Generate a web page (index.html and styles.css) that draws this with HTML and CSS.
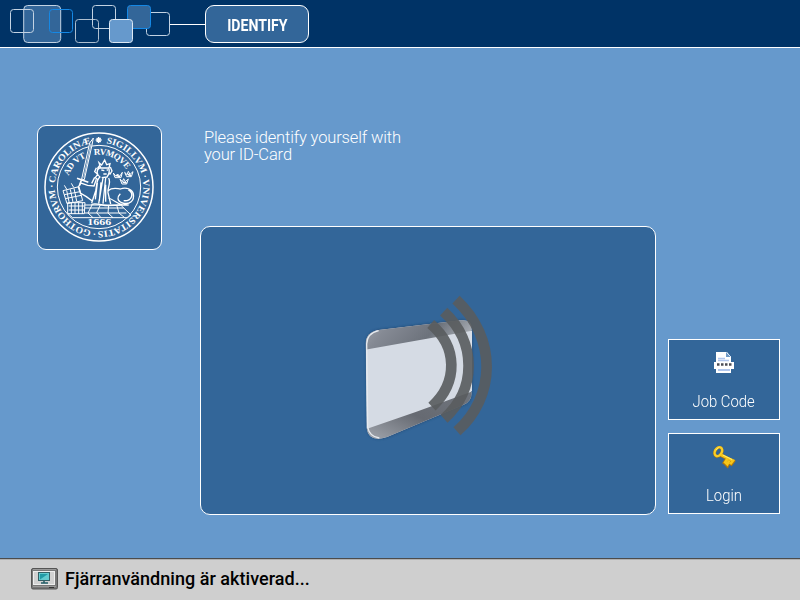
FILE: index.html
```html
<!DOCTYPE html>
<html lang="en">
<head>
<meta charset="utf-8">
<title>Identify</title>
<link rel="stylesheet" href="styles.css">
</head>
<body>
<div class="screen">
  <header class="header">
    <svg class="chain" width="205" height="47" viewBox="0 0 205 47" fill="none">
      <rect x="23.700" y="5.500" width="37" height="37" rx="4" fill="#336699" stroke="#c3d3e3"/>
      <rect x="10.500" y="9.500" width="23" height="23" rx="3" stroke="#c3d3e3"/>
      <rect x="49.500" y="9.500" width="23" height="23" rx="3" stroke="#1588e5"/>
      <rect x="75.500" y="19.500" width="23" height="23" rx="3" stroke="#aebfd0"/>
      <rect x="92.500" y="5.500" width="23" height="23" rx="3" stroke="#c3d3e3"/>
      <rect x="146.500" y="12.500" width="23" height="23" rx="3" stroke="#c3d3e3"/>
      <rect x="127.500" y="5.500" width="23" height="23" rx="3" fill="#336699" stroke="#1588e5"/>
      <rect x="109.500" y="19.500" width="23" height="23" rx="3" fill="#6699cc" stroke="#dce8f4"/>
      <path d="M170 24.500H205" stroke="#fff"/>
    </svg>
    <div class="tab"><span class="tab-text">IDENTIFY</span></div>
  </header>
  <main class="main">
    <div class="crest">
      <svg width="123" height="123" viewBox="12 12 369 369" fill="none" stroke="#fff">
        <defs>
          <path id="outer" d="M195 328A133 133 0 0 1 195 62A133 133 0 0 1 195 328"/>
          <path id="inner" d="M98 195A97 97 0 0 1 292 195"/>
        </defs>
        <circle cx="195" cy="195" r="162" stroke-width="4.500"/>
        <circle cx="195" cy="195" r="125" stroke-width="3"/>
        <g class="legend" transform="rotate(7 195 195)">
          <text><textPath href="#outer" startOffset="7" textLength="178" lengthAdjust="spacingAndGlyphs">GOTHORVM</textPath></text>
          <text><textPath href="#outer" startOffset="190">·</textPath></text>
          <text><textPath href="#outer" startOffset="204" textLength="174" lengthAdjust="spacingAndGlyphs">CAROLINÆ</textPath></text>
          <text><textPath href="#outer" startOffset="423" textLength="147" lengthAdjust="spacingAndGlyphs">SIGILLVM</textPath></text>
          <text><textPath href="#outer" startOffset="575">·</textPath></text>
          <text><textPath href="#outer" startOffset="588" textLength="235" lengthAdjust="spacingAndGlyphs">VNIVERSITATIS</textPath></text>
          <text><textPath href="#outer" startOffset="827">·</textPath></text>
        </g>
        <g class="motto">
          <text><textPath href="#inner" startOffset="34" textLength="78">AD VT</textPath></text>
          <text><textPath href="#inner" startOffset="137" textLength="112">RVMQVE</textPath></text>
        </g>
        <path d="M194 45v18M185 54h18M188 48l12 12M200 48l-12 12" stroke-width="4"/>
        <path d="M178 48l-11 15-24 108 8 2 23-104z" fill="#336699" stroke-width="3"/>
        <path d="M171 65l-22 102" stroke-width="2"/>
        <path d="M129 169l34 12M143 172l-7 19" stroke-width="5"/>
        <path d="M195 122l8 7 9-15 6 14 10-3-3 13h-25zM190 140l7-10M198 137c-13 7-10 22 1 29M224 138c5 12 1 19-5 27l-16 2M202 144l9 2M218 143l4 2M208 156h10M187 137l-5 12 9 8-7 10 8 6M229 135l5 12-7 11" stroke-width="4"/>
        <path d="M198 165c-12 8-9 28-13 42l-12 36M207 168l-13 77M215 168l-8 77M224 168c8 14-4 30-2 44l8 34M187 172l-7 20-19-2-20-7-8 12 6 18 18 11 19 14M182 166l-9 18M190 183l-6 49M201 181l-5 56M215 188v51" stroke-width="4"/>
        <path d="M222 206c14-11 26-6 37-5 17-7 36 0 39 15 4 20-11 33-32 27-18-6-17-18-7-28M283 203c19 12 10 35-14 33M224 228c18 7 26 18 42 21l-45 2c-17 0-31-9-49-4M284 249h-24" stroke-width="4"/>
        <g stroke-width="3">
          <path d="M238 153l8 10 5-7 6 7 8-12-4 16h-18zM272 151l7 7 4-10 5 9 9-8-5 15h-14zM258 171l7 8 4-9 5 9 9-8-5 15h-14z"/>
          <path d="M247 160l11 5M281 157l10 4M266 180l12 3" stroke-width="5"/>
        </g>
        <path d="M87 206l48-12 11 42-47 9zM98 205l8 39M109 202l8 39M120 199l8 38M91 218l47-9M94 230l48-10M91 190l8 13M112 184l7 12M101 242h52l-2 33h-50zM112 242v34M123 242v34M134 242v34M145 242v34M104 252h47M104 264h47" stroke-width="3"/>
        <path d="M151 249h109l31 30-10 8H116l-14-12M151 258h118M151 273h126M174 249l-12 24 15 14M199 249l-11 23 13 15M224 249l-2 24 15 14M248 249l7 24 17 14" stroke-width="3"/>
        <text class="year" x="160" y="308" textLength="72" lengthAdjust="spacingAndGlyphs">1666</text>
      </svg>
    </div>
    <section class="content">
      <div class="prompt"><div class="line-one">Please identify yourself with</div><div class="line-two">your ID-Card</div></div>
      <div class="reader">
        <svg class="card" width="145" height="160" viewBox="0 0 435 480">
          <defs>
            <linearGradient id="edge" x1="0" y1="0" x2="1" y2="0.3"><stop offset="0" stop-color="#a6abb4"/><stop offset=".3" stop-color="#858a94"/><stop offset=".7" stop-color="#6c727b"/><stop offset="1" stop-color="#a4a9b0"/></linearGradient>
            <linearGradient id="low" x1="0" y1="1" x2="1" y2="0"><stop offset="0" stop-color="#a8adb5"/><stop offset=".5" stop-color="#666a72"/><stop offset="1" stop-color="#70757d"/></linearGradient>
            <clipPath id="shape"><path d="M32 176Q33 142 71 135L318 106Q350 104 350 130V326Q349 349 326 359L96 456Q41 474 35 429Z"/></clipPath>
            <filter id="shade" x="-10%" y="-10%" width="120%" height="120%"><feGaussianBlur stdDeviation="5"/></filter>
          </defs>
          <path d="M34 176Q35 142 71 135L318 106Q350 104 350 130V326Q349 349 326 359L96 456Q43 472 37 429Z" fill="#183b60" opacity=".8" filter="url(#shade)"/>
          <g clip-path="url(#shape)">
            <path d="M25 90h335v380H25z" fill="#d5dbe4"/>
            <path d="M25 90h335v46L25 195z" fill="url(#edge)"/>
            <path d="M25 435L180 382 360 316v160H25z" fill="url(#low)"/>
          </g>
          <path d="M71 137Q36 145 35 177L38 426Q43 455 73 459" fill="none" stroke="#e7ebf0" stroke-width="4"/>
          <path d="M349 138v180" stroke="#eef1f5" stroke-width="3"/>
          <g fill="none" stroke="#595c5f" stroke-opacity=".91" stroke-width="32">
            <path d="M227 117C308 185 310 292 231 365"/>
            <path d="M266 80C366 171 365 314 267 401"/>
            <path d="M303 44C428 160 422 336 306 439"/>
          </g>
        </svg>
      </div>
    </section>
    <nav class="actions">
      <div class="button">
        <svg class="icon" width="24" height="24" viewBox="-1 0 24 24">
          <path d="M3 1h11l4 5v16H3z" fill="#fff"/>
          <path d="M13 1v5h5z" fill="#6e99c6"/><path d="M14 2l4 4" stroke="#dce9fa"/>
          <path d="M5 7.500h7M5 9.500h11" stroke="#b1c6ed" stroke-width="1.500"/>
          <path d="M1 11h20v7H1z" fill="#fff"/>
          <path d="M4 13.500h2.500M8 13.500h2.500M12 13.500h2.500M16 13.500h2.500" stroke="#4c4c54" stroke-width="2.500"/>
          <path d="M5 19h12" stroke="#b1c6ed" stroke-width="2"/>
        </svg>
        <span class="job">Job Code</span>
      </div>
      <div class="button">
        <svg class="icon" width="24" height="24" viewBox="-1.300 -.5 25.500 25.500" fill="none">
          <ellipse cx="5.500" cy="6.800" rx="3.600" ry="5" transform="rotate(30 5.500 6.800)" stroke="#b37b07" stroke-width="3.200"/>
          <path d="M8 10l13 7-3 4M15 14l-4 6M11 17l4 4 2-4" stroke="#b57908" stroke-width="4"/>
          <ellipse cx="5.500" cy="6.500" rx="3.600" ry="5" transform="rotate(30 5.500 6.500)" stroke="#f9ce28" stroke-width="2.500"/>
          <path d="M8 10l13 6-3 4M15 14l-3 5M12 17l3 3 2-4" stroke="#f7c719" stroke-width="2.800"/>
          <path d="M3 5l3-3M10 10l10 5" stroke="#fff37d"/>
        </svg>
        <span class="login">Login</span>
      </div>
    </nav>
  </main>
  <footer class="footer">
    <svg width="28" height="23" viewBox="0 0 28 23">
      <rect x=".5" y=".5" width="26" height="20.500" rx="1.500" fill="#777" stroke="#555"/>
      <path d="M2 1.500h23" stroke="#999"/>
      <rect x="2.500" y="3.500" width="21" height="13" fill="#d1d1d1" stroke="#eee"/>
      <rect x="7.500" y="4.500" width="11" height="8" fill="#63cbd0" stroke="#345f65"/>
      <path d="M9 11.500V6h8z" fill="#219ba6"/>
      <path d="M13 13v2M10 15h7" stroke="#235c65" stroke-width="1.500"/>
      <path d="M2 18.500h23" stroke="#999"/><path d="M18 19.500h5" stroke="#333"/>
    </svg>
    <span class="status">Fjärranvändning är aktiverad...</span>
  </footer>
</div>
</body>
</html>
```
FILE: styles.css
```css
* { box-sizing: border-box; }
body { margin: 0; font-family: Roboto, "Liberation Sans", sans-serif; }
.screen { width: 800px; height: 600px; display: flex; flex-direction: column; background: #6699cc; overflow: hidden; }
.header { height: 48px; flex: none; display: flex; background: #003366; border-bottom: 1px solid #fff; }
.chain { flex: none; }
.tab { width: 104px; height: 38px; margin-top: 5px; border: 1px solid #fff; border-radius: 9px; background: #336699; display: flex; align-items: center; justify-content: center; color: #fff; }
.tab-text { font-size: 17px; font-weight: 700; margin-top: 2px; transform: scaleX(.83); }
.main { height: 510px; flex: none; display: grid; grid-template-columns: 163px 456px 12px 112px; padding-left: 37px; }
.crest { width: 125px; height: 125px; margin-top: 77px; border: 1px solid #fff; border-radius: 9px; background: #336699; }
.crest svg { display: block; }
.crest text { fill: #fff; stroke: none; font-family: "Liberation Serif", serif; font-weight: 700; }
.legend text { font-size: 28px; }
.motto text { font-size: 27px; }
.crest .year { font-size: 25px; }
.content { padding-top: 81px; }
.prompt { margin-left: 4px; height: 97px; color: #fff; font-size: 16.5px; font-weight: 300; line-height: 17px; white-space: nowrap; }
.line-one, .line-two { height: 17px; letter-spacing: -.15px; }
.reader { width: 456px; height: 289px; border: 1px solid #fff; border-radius: 10px; background: #336699; }
.card { display: block; margin: 58px 0 0 154px; }
.actions { grid-column: 4; padding-top: 291px; display: flex; flex-direction: column; gap: 13px; }
.button { width: 112px; height: 81px; border: 1px solid #fff; background: #336699; color: #fff; display: flex; flex-direction: column; align-items: center; font-size: 16.5px; font-weight: 300; line-height: 20px; }
.icon { margin-top: 11px; }
.button span { margin-top: 17px; transform: scaleX(.9); }
.footer { height: 42px; flex: none; display: flex; align-items: center; gap: 6px; padding-left: 31px; border-top: 1px solid #4c4c4c; background: #cfcfcf; box-shadow: inset 0 1px #b0b0b0; }
.status { font-size: 18px; font-weight: 500; color: #000; white-space: nowrap; margin-top: -2px; letter-spacing: .03px; }
```
